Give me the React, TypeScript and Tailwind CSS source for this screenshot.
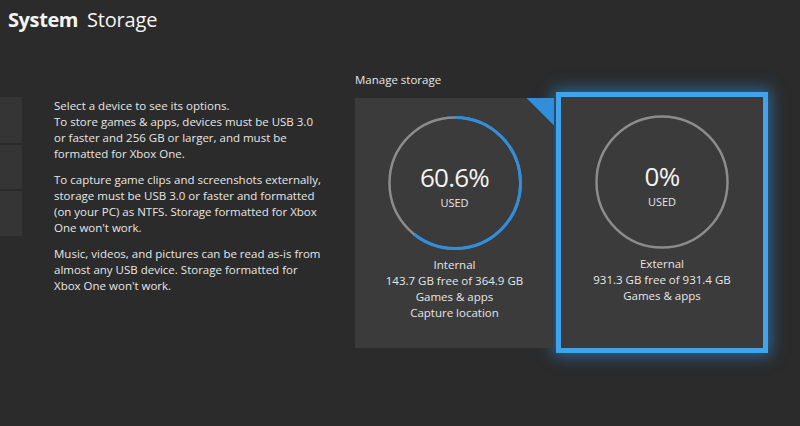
import React from "react";

const font = { fontFamily: '"Open Sans", "Noto Sans", sans-serif' };

function Ring({ percent }: { percent: number }) {
  const r = 65.5;
  const c = 2 * Math.PI * r;
  return (
    <svg width="134" height="134" viewBox="0 0 134 134" className="-rotate-90">
      <circle cx="67" cy="67" r={r} fill="none" stroke="#8c8c8c" strokeWidth="2.5" />
      {percent > 0 && (
        <circle
          cx="67"
          cy="67"
          r={r}
          fill="none"
          stroke="#2f8fdc"
          strokeWidth="3"
          strokeDasharray={`${(c * percent) / 100} ${c}`}
        />
      )}
    </svg>
  );
}

function DeviceBody({ value, lines }: { value: string; lines: string[] }) {
  return (
    <div className="flex flex-col items-center pt-[18px]">
      <div className="relative h-[134px] w-[134px]">
        <Ring percent={parseFloat(value)} />
        <div className="absolute inset-0 flex flex-col items-center justify-center pt-[6px]">
          <span className="text-[26px] leading-[30px] tracking-[-0.8px] text-[#f2f2f2]">{value}</span>
          <span className="mt-[4px] text-[11px] leading-[14px] text-[#e6e6e6]">USED</span>
        </div>
      </div>
      <div className="mt-[7px] flex flex-col items-center text-[11.5px] leading-[16px] text-[#e6e6e6]">
        {lines.map((l) => (
          <span key={l}>{l}</span>
        ))}
      </div>
    </div>
  );
}

export default function App() {
  return (
    <div style={font} className="flex h-[426px] w-[800px] flex-col overflow-hidden bg-[#2b2b2b] text-[#e6e6e6]">
      {/* Header */}
      <div className="flex h-[70px] items-baseline pl-[8px] pt-[3px] text-[20px] leading-[34px] text-[#f5f5f5]">
        <span className="font-bold tracking-[-0.4px]">System</span>
        <span className="ml-[9px] tracking-[-0.2px]">Storage</span>
      </div>

      <div className="flex">
        {/* device tiles cut off at the left edge */}
        <div className="mt-[27px] flex w-[22px] flex-col gap-[2px]">
          <div className="h-[46px] bg-[#353535]" />
          <div className="h-[44px] bg-[#353535]" />
          <div className="h-[45px] bg-[#353535]" />
        </div>

        {/* Help text */}
        <div className="ml-[32px] mt-[28px] w-[272px] text-[11.5px] leading-[16px] text-[#e6e6e6]">
          <p>
            Select a device to see its options.
            <br />
            To store games &amp; apps, devices must be USB 3.0 or faster and 256 GB or larger, and must be
            formatted for Xbox One.
          </p>
          <p className="mt-[10px]">
            To capture game clips and screenshots externally, storage must be USB 3.0 or faster and formatted
            (on your PC) as NTFS. Storage formatted for Xbox One won't work.
          </p>
          <p className="mt-[10px]">
            Music, videos, and pictures can be read as-is from almost any USB device. Storage formatted for
            Xbox One won't work.
          </p>
        </div>

        {/* Manage storage */}
        <div className="ml-[29px] flex flex-col">
          <div className="mt-[2px] text-[11.5px] leading-[16px] text-[#e6e6e6]">Manage storage</div>
          <div className="mt-[4px] flex items-center">
            <div className="relative h-[250px] w-[199px] bg-[#3b3b3b]">
              <div className="absolute right-0 top-0 h-[28px] w-[28px] bg-[#2f8fdc] [clip-path:polygon(0_0,100%_0,100%_100%)]" />
              <DeviceBody
                value="60.6%"
                lines={["Internal", "143.7 GB free of 364.9 GB", "Games & apps", "Capture location"]}
              />
            </div>
            <div className="ml-[2px] h-[261px] w-[212px] border-[5px] border-[#41a3ec] bg-[#3b3b3b] shadow-[0_0_14px_3px_rgba(40,150,235,0.55)]">
              <DeviceBody value="0%" lines={["External", "931.3 GB free of 931.4 GB", "Games & apps"]} />
            </div>
          </div>
        </div>
      </div>
    </div>
  );
}
